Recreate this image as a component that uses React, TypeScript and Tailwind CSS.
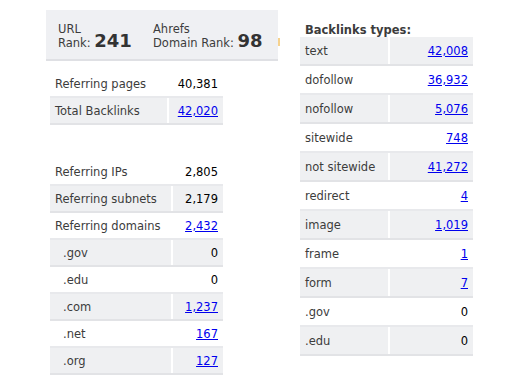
import React from 'react'

type Row = { label: string; value: string; link?: boolean; indent?: boolean }

const topRows: Row[] = [
  { label: 'Referring pages', value: '40,381' },
  { label: 'Total Backlinks', value: '42,020', link: true },
]

const domainRows: Row[] = [
  { label: 'Referring IPs', value: '2,805' },
  { label: 'Referring subnets', value: '2,179' },
  { label: 'Referring domains', value: '2,432', link: true },
  { label: '.gov', value: '0', indent: true },
  { label: '.edu', value: '0', indent: true },
  { label: '.com', value: '1,237', link: true, indent: true },
  { label: '.net', value: '167', link: true, indent: true },
  { label: '.org', value: '127', link: true, indent: true },
]

const typeRows: Row[] = [
  { label: 'text', value: '42,008', link: true },
  { label: 'dofollow', value: '36,932', link: true },
  { label: 'nofollow', value: '5,076', link: true },
  { label: 'sitewide', value: '748', link: true },
  { label: 'not sitewide', value: '41,272', link: true },
  { label: 'redirect', value: '4', link: true },
  { label: 'image', value: '1,019', link: true },
  { label: 'frame', value: '1', link: true },
  { label: 'form', value: '7', link: true },
  { label: '.gov', value: '0' },
  { label: '.edu', value: '0' },
]

function StatsTable({
  rows,
  labelWidth,
  rowHeight,
  greyFirst = false,
}: {
  rows: Row[]
  labelWidth: string
  rowHeight: string
  greyFirst?: boolean
}) {
  return (
    <div className="flex flex-col">
      {rows.map((row, i) => {
        const grey = greyFirst ? i % 2 === 0 : i % 2 === 1
        return (
          <div
            key={row.label + i}
            className={`flex ${rowHeight} border-b-2 ${
              grey ? 'bg-[#eff0f2] border-[#e2e3e6]' : 'bg-white border-[#e8e9ec]'
            }`}
          >
            <div
              className={`${labelWidth} flex items-center border-r-2 border-white text-[#3c3c3c] ${
                row.indent ? 'pl-[13px]' : 'pl-[5px]'
              }`}
            >
              {row.label}
            </div>
            <div className="flex-1 flex items-center justify-end pr-[5px]">
              {row.link ? (
                <a href="#" className="text-[#0000ee] underline">
                  {row.value}
                </a>
              ) : (
                <span className="text-black">{row.value}</span>
              )}
            </div>
          </div>
        )
      })}
    </div>
  )
}

export default function App() {
  return (
    <div
      className="flex items-start w-[527px] h-[386px] bg-white pl-[46px] pt-[10px] text-[11.5px] leading-[14px]"
      style={{ fontFamily: '"DejaVu Sans", Verdana, sans-serif' }}
    >
      {/* Left column */}
      <div className="flex flex-col w-[232px]">
        <div className="flex items-end h-[51px] bg-[#eff0f3] border-b-2 border-[#dfe0e4] pl-[12px] pb-[9px] text-[#3c3c3c] leading-[14px]">
          <div className="w-[95px]">
            URL
            <br />
            Rank: <span className="text-[18px] leading-[8px] font-bold text-[#333]">241</span>
          </div>
          <div>
            Ahrefs
            <br />
            Domain Rank: <span className="text-[18px] leading-[8px] font-bold text-[#333]">98</span>
          </div>
        </div>

        <div className="ml-[4px] mt-[10px] w-[173px]">
          <StatsTable rows={topRows} labelWidth="w-[119px]" rowHeight="h-[27px]" />
        </div>

        <div className="ml-[4px] mt-[34px] w-[173px]">
          <StatsTable rows={domainRows} labelWidth="w-[123px]" rowHeight="h-[27px]" />
        </div>
      </div>

      <div className="mt-[28px] w-[2px] h-[8px] bg-[#f6d28e]" />

      {/* Right column */}
      <div className="ml-[20px] w-[173px] pt-[14px]">
        <div className="pl-[5px] font-bold text-[#3c3c3c] h-[13px] leading-[13px]">Backlinks types:</div>
        <StatsTable rows={typeRows} labelWidth="w-[90px]" rowHeight="h-[29px]" greyFirst />
      </div>
    </div>
  )
}
